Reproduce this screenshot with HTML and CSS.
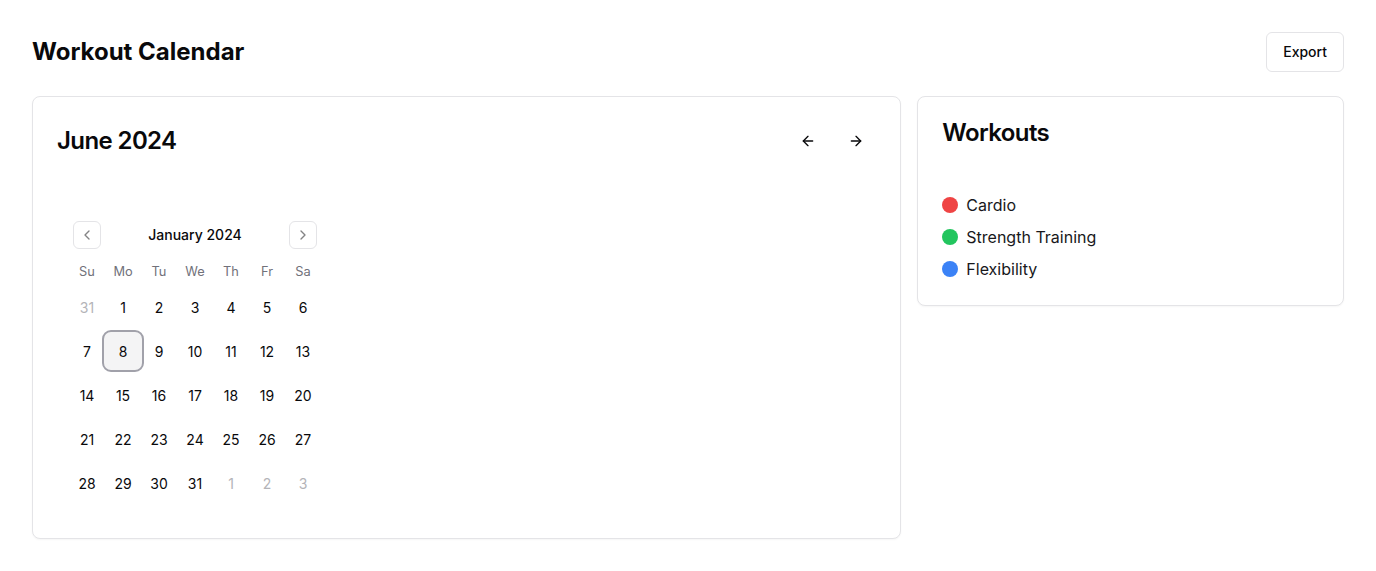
FILE: index.html
```html
<!DOCTYPE html>
<html lang="en">
<head>
<meta charset="utf-8">
<title>Workout Calendar</title>
<link rel="stylesheet" href="styles.css">
</head>
<body>
<div class="page">
  <header class="topbar">
    <h1 class="page-title">Workout Calendar</h1>
    <button class="btn-outline">Export</button>
  </header>
  <div class="grid">
    <section class="card card-main">
      <div class="card-header row">
        <h2 class="card-title">June 2024</h2>
        <div class="nav-arrows">
          <button class="btn-ghost" aria-label="Previous">
            <svg width="16" height="16" viewBox="0 0 24 24" fill="none" stroke="currentColor" stroke-width="2" stroke-linecap="round" stroke-linejoin="round"><path d="m12 19-7-7 7-7"/><path d="M19 12H5"/></svg>
          </button>
          <button class="btn-ghost" aria-label="Next">
            <svg width="16" height="16" viewBox="0 0 24 24" fill="none" stroke="currentColor" stroke-width="2" stroke-linecap="round" stroke-linejoin="round"><path d="M5 12h14"/><path d="m12 5 7 7-7 7"/></svg>
          </button>
        </div>
      </div>
      <div class="card-content">
        <div class="calendar">
          <div class="caption">
            <button class="cal-nav cal-prev" aria-label="Previous month">
              <svg width="16" height="16" viewBox="0 0 24 24" fill="none" stroke="currentColor" stroke-width="2" stroke-linecap="round" stroke-linejoin="round"><path d="m15 18-6-6 6-6"/></svg>
            </button>
            <span class="caption-label">January 2024</span>
            <button class="cal-nav cal-next" aria-label="Next month">
              <svg width="16" height="16" viewBox="0 0 24 24" fill="none" stroke="currentColor" stroke-width="2" stroke-linecap="round" stroke-linejoin="round"><path d="m9 18 6-6-6-6"/></svg>
            </button>
          </div>
          <div class="weekdays">
            <span>Su</span><span>Mo</span><span>Tu</span><span>We</span><span>Th</span><span>Fr</span><span>Sa</span>
          </div>
          <div class="week"><span class="day outside">31</span><span class="day">1</span><span class="day">2</span><span class="day">3</span><span class="day">4</span><span class="day">5</span><span class="day">6</span></div>
          <div class="week"><span class="day">7</span><span class="day selected">8</span><span class="day">9</span><span class="day">10</span><span class="day">11</span><span class="day">12</span><span class="day">13</span></div>
          <div class="week"><span class="day">14</span><span class="day">15</span><span class="day">16</span><span class="day">17</span><span class="day">18</span><span class="day">19</span><span class="day">20</span></div>
          <div class="week"><span class="day">21</span><span class="day">22</span><span class="day">23</span><span class="day">24</span><span class="day">25</span><span class="day">26</span><span class="day">27</span></div>
          <div class="week"><span class="day">28</span><span class="day">29</span><span class="day">30</span><span class="day">31</span><span class="day outside">1</span><span class="day outside">2</span><span class="day outside">3</span></div>
        </div>
      </div>
    </section>
    <aside class="card card-side">
      <div class="card-header">
        <h2 class="card-title">Workouts</h2>
      </div>
      <div class="card-content legend">
        <div class="legend-item"><span class="dot red"></span>Cardio</div>
        <div class="legend-item"><span class="dot green"></span>Strength Training</div>
        <div class="legend-item"><span class="dot blue"></span>Flexibility</div>
      </div>
    </aside>
  </div>
</div>
</body>
</html>
```

FILE: styles.css
```css
* { box-sizing: border-box; }
html, body { margin: 0; padding: 0; background: #fff; }
body {
  font-family: Inter, "Noto Sans", "Liberation Sans", sans-serif;
  color: #09090b;
}
button { font-family: inherit; }
.page { padding: 32px; }
.topbar {
  display: flex;
  justify-content: space-between;
  align-items: center;
  height: 40px;
  margin-bottom: 24px;
}
.page-title {
  margin: 0;
  font-size: 24px;
  line-height: 32px;
  font-weight: 700;
  letter-spacing: 0;
}
.btn-outline {
  height: 40px;
  padding: 0 16px;
  border: 1px solid #e4e4e7;
  border-radius: 6px;
  background: #fff;
  font-size: 14px;
  line-height: 20px;
  font-weight: 500;
  color: #09090b;
  padding-bottom: 1px;
}
.grid {
  display: grid;
  grid-template-columns: repeat(3, 1fr);
  gap: 16px;
  align-items: start;
}
.card {
  border: 1px solid #e4e4e7;
  border-radius: 8px;
  background: #fff;
  box-shadow: 0 1px 2px rgba(0,0,0,0.04);
}
.card-main { grid-column: span 2; }
.card-header { padding: 24px; }
.card-header.row {
  display: flex;
  justify-content: space-between;
  align-items: center;
}
.card-title {
  margin: 0;
  font-size: 24px;
  line-height: 24px;
  font-weight: 600;
  letter-spacing: -0.6px;
}
.nav-arrows { display: flex; gap: 8px; }
.btn-ghost {
  width: 40px;
  height: 40px;
  border: 0;
  background: transparent;
  border-radius: 6px;
  display: flex;
  align-items: center;
  justify-content: center;
  color: #09090b;
  padding: 0;
}
.card-content { padding: 24px; }
.card-main .card-content { padding-bottom: 25px; }
.calendar { padding: 12px; width: 276px; }
.caption {
  position: relative;
  height: 28px;
  display: flex;
  align-items: center;
  justify-content: center;
  margin-bottom: 16px;
}
.caption-label { font-size: 14px; line-height: 20px; font-weight: 500; color: #09090b; margin-top: -1px; }
.cal-nav {
  position: absolute;
  top: 0;
  width: 28px;
  height: 28px;
  border: 1px solid #e4e4e7;
  border-radius: 6px;
  background: #fff;
  display: flex;
  align-items: center;
  justify-content: center;
  padding: 0;
  color: #09090b;
}
.cal-nav svg { opacity: 0.5; }
.cal-prev { left: 4px; }
.cal-next { right: 4px; }
.weekdays {
  display: grid;
  grid-template-columns: repeat(7, 36px);
  height: 14px;
  line-height: 14px;
  font-size: 12.8px;
  color: #71717a;
  text-align: center;
  margin-bottom: 10px;
}
.week {
  display: grid;
  grid-template-columns: repeat(7, 36px);
  margin-bottom: 8px;
}
.week:last-child { margin-bottom: 0; }
.day {
  height: 36px;
  display: flex;
  align-items: center;
  justify-content: center;
  font-size: 14px;
  color: #09090b;
  border-radius: 6px;
}
.day.outside { color: #b4b4b8; }
.day.selected {
  background: #f4f4f5;
  box-shadow: 0 0 0 1px #f4f4f5;
  outline: 2px solid #a1a1aa;
  outline-offset: 1px;
}
.legend { padding-top: 24px; display: flex; flex-direction: column; gap: 8px; }
.legend-item {
  display: flex;
  align-items: center;
  gap: 8px;
  font-size: 16px;
  line-height: 24px;
  color: #18181b;
}
.dot { width: 16px; height: 16px; border-radius: 50%; }
.red { background: #ef4444; }
.green { background: #22c55e; }
.blue { background: #3b82f6; }
```
